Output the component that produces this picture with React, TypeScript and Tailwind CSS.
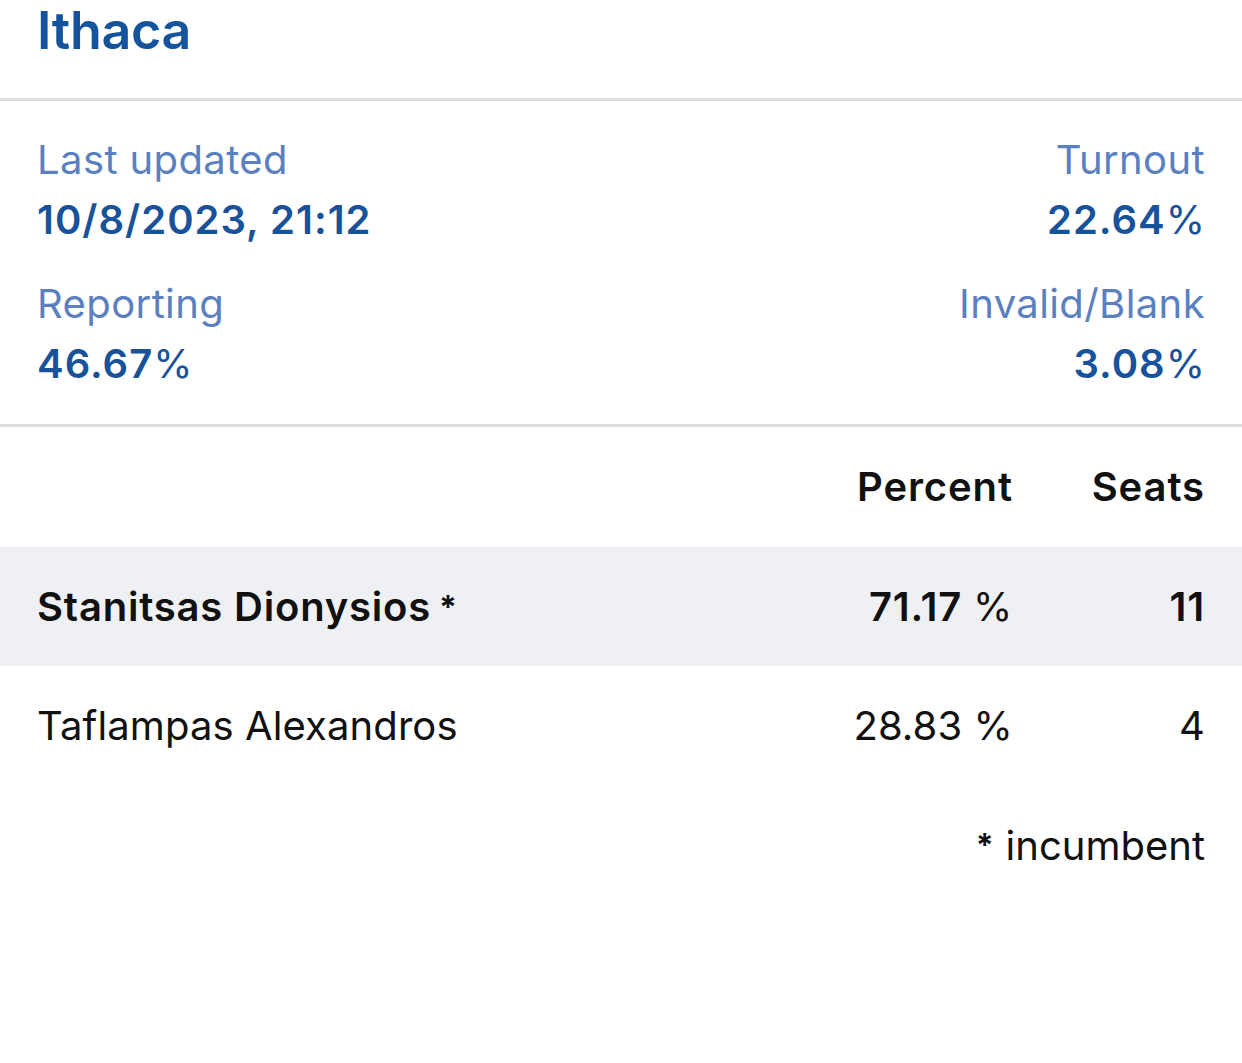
import React from "react"

const font = { fontFamily: "Inter, 'Noto Sans', sans-serif" }

function Stat({ label, value, align }: { label: string; value: React.ReactNode; align: "left" | "right" }) {
  return (
    <div className={align === "right" ? "text-right" : "text-left"}>
      <div className="text-[40px] leading-[60px] text-[#5a80bf] tracking-[0.4px]">{label}</div>
      <div className="text-[40px] leading-[60px] font-semibold text-[#17529a] tracking-[1px]">{value}</div>
    </div>
  )
}

function Pct({ n }: { n: string }) {
  return (
    <>
      {n}
      <span className="font-normal tracking-normal">%</span>
    </>
  )
}

export default function App() {
  const rows = [
    { name: "Stanitsas Dionysios", incumbent: true, pct: "71.17", seats: "11", lead: true },
    { name: "Taflampas Alexandros", incumbent: false, pct: "28.83", seats: "4", lead: false },
  ]

  return (
    <div className="w-[1242px] h-[1063px] bg-white" style={font}>
      <div className="h-[98px] px-[37px]">
        <h1 className="text-[52px] leading-[62px] font-semibold text-[#15549c] tracking-[-0.3px]">Ithaca</h1>
      </div>
      <div className="h-[3px] bg-[#dcdcdf]" />

      <div className="px-[37px] pt-[29px] pb-[30px] flex flex-col gap-[24px]">
        <div className="flex justify-between">
          <Stat label="Last updated" value="10/8/2023, 21:12" align="left" />
          <Stat label="Turnout" value={<Pct n="22.64" />} align="right" />
        </div>
        <div className="flex justify-between">
          <Stat label="Reporting" value={<Pct n="46.67" />} align="left" />
          <Stat label="Invalid/Blank" value={<Pct n="3.08" />} align="right" />
        </div>
      </div>
      <div className="h-[3px] bg-[#dcdcdf]" />

      <div className="text-[40px] text-[#111]">
        <div className="h-[120px] flex items-center px-[37px] font-semibold tracking-[0.9px]">
          <div className="flex-1" />
          <div className="text-right">Percent</div>
          <div className="w-[192px] text-right">Seats</div>
        </div>
        {rows.map((r) => (
          <div
            key={r.name}
            className={
              r.lead
                ? "h-[119px] flex items-center px-[37px] bg-[#eff0f4] font-semibold tracking-[0.8px]"
                : "h-[120px] flex items-center px-[37px] tracking-[0.1px]"
            }
          >
            <div className="flex-1">
              {r.name}
              {r.incumbent && <span className="ml-[8px] text-[32px] font-bold align-[2px]">*</span>}
            </div>
            <div className="text-right">
              {r.pct} <span className="font-normal">%</span>
            </div>
            <div className="w-[192px] text-right">{r.seats}</div>
          </div>
        ))}
        <div className="h-[120px] flex items-center justify-end px-[37px]">
          <span className="text-[32px] font-bold mr-[12px] align-[2px]">*</span>
          <span>incumbent</span>
        </div>
      </div>
    </div>
  )
}
